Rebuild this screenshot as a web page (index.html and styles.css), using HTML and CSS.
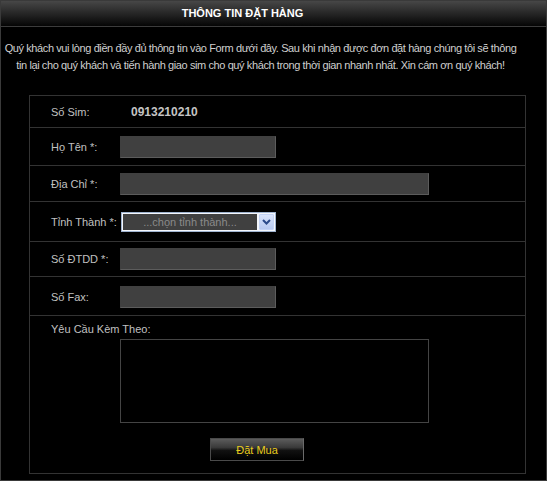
FILE: index.html
```html
<!DOCTYPE html>
<html lang="vi">
<head>
<meta charset="utf-8">
<title>Thông tin đặt hàng</title>
<link rel="stylesheet" href="styles.css">
</head>
<body>
<div class="frame">
  <div class="header">THÔNG TIN ĐẶT HÀNG</div>
  <p class="intro">Quý khách vui lòng điền đầy đủ thông tin vào Form dưới đây. Sau khi nhận được đơn đặt hàng chúng tôi sẽ thông tin lại cho quý khách và tiến hành giao sim cho quý khách trong thời gian nhanh nhất. Xin cám ơn quý khách!</p>
  <form class="table">
    <div class="row h31">
      <span class="label">Số Sim:</span>
      <span class="value">0913210210</span>
    </div>
    <div class="row h37">
      <span class="label">Họ Tên *:</span>
      <input class="field" type="text">
    </div>
    <div class="row h35">
      <span class="label">Địa Chỉ *:</span>
      <input class="field wide" type="text">
    </div>
    <div class="row h39">
      <span class="label">Tỉnh Thành *:</span>
      <div class="select">
        <select class="select-box"><option>...chọn tỉnh thành...</option></select>
        <span class="select-btn"><svg width="9" height="6" viewBox="0 0 9 6"><path d="M1 1 L4.5 4.5 L8 1" fill="none" stroke="#2b4a8a" stroke-width="2"/></svg></span>
      </div>
    </div>
    <div class="row h34">
      <span class="label">Số ĐTDD *:</span>
      <input class="field" type="text">
    </div>
    <div class="row h38">
      <span class="label">Số Fax:</span>
      <input class="field" type="text">
    </div>
    <div class="last">
      <span class="label">Yêu Cầu Kèm Theo:</span>
      <textarea class="note"></textarea>
      <div class="actions"><button type="button" class="btn">Đặt Mua</button></div>
    </div>
  </form>
</div>
</body>
</html>
```
FILE: styles.css
```css
* { box-sizing: border-box; }
html, body { margin: 0; padding: 0; background: #000; }
body { font-family: "Liberation Sans", Arial, sans-serif; font-size: 11px; color: #c8c8c8; }
.frame {
  width: 547px; height: 481px;
  border: 1px solid #3a3a3a;
  background: #000;
}
.header {
  height: 26px;
  background: linear-gradient(#474747, #262626 50%, #050505);
  border-bottom: 1px solid #3c3c3c;
  color: #fff;
  font-weight: bold;
  font-size: 11px;
  line-height: 25px;
  text-align: center;
  padding-right: 62px;
}
.intro {
  margin: 13px 0 0 0;
  width: 519px;
  height: 55px;
  text-align: center;
  line-height: 17px;
  letter-spacing: -0.4px;
  color: #cfcfcf;
}
.table {
  margin: 0 0 0 28px;
  width: 497px;
  border: 1px solid #333;
}
.row {
  display: flex;
  align-items: center;
  padding-left: 21px;
  border-bottom: 1px solid #333;
}
.h31 { height: 32px; }
.h37 { height: 38px; padding-top: 1px; }
.h35 { height: 36px; padding-top: 1px; }
.h39 { height: 40px; }
.h34 { height: 35px; }
.h38 { height: 39px; padding-top: 1px; }
.label { width: 69px; flex: none; color: #c0c0c0; white-space: nowrap; }
.value { font-weight: bold; color: #c4c4c4; margin-left: 11px; font-size: 12px; }
.field {
  width: 156px; height: 22px;
  background: #404040;
  border: 1px solid #404040;
  border-right-color: #5c5c5c;
  border-bottom-color: #5c5c5c;
  margin: 0;
  padding: 0 3px;
  color: #ddd;
  font: inherit;
}
.field.wide { width: 309px; }
.select {
  display: flex;
  gap: 2px;
  margin-left: 1px;
  width: 155px; height: 20px;
  border: 1px solid #9fb3cf;
  background: #f4f7fc;
  padding: 1px;
}
.select-box {
  appearance: none;
  -webkit-appearance: none;
  flex: 1;
  min-width: 0;
  height: 16px;
  margin: 0;
  border: 0;
  background: #404040;
  color: #8a8a8a;
  font: inherit;
  font-size: 11px;
  text-align: center;
  text-align-last: center;
  padding: 0;
  line-height: 16px;
}
.select-btn {
  width: 15px; height: 16px;
  flex: none;
  display: flex; align-items: center; justify-content: center;
  background: linear-gradient(#d9e4fb, #b7c9f0);
  border: 1px solid #c3d3f5;
  border-radius: 1px;
}
.last {
  height: 157px;
  display: grid;
  grid-template-columns: 69px 309px;
  align-content: start;
  padding: 7px 0 0 21px;
}
.last .label { grid-column: 1 / 3; line-height: 12px; }
.note {
  grid-column: 2;
  margin: 4px 0 0 0;
  width: 309px; height: 84px;
  background: #000;
  border: 1px solid #444;
  resize: none;
  color: #ccc;
  font: inherit;
}
.actions { grid-column: 1 / 3; padding: 15px 0 0 159px; }
.btn {
  display: block;
  width: 94px; height: 23px;
  margin: 0;
  border: 1px solid #4a4a4a;
  border-right-color: #6a6a6a;
  background: linear-gradient(#5c5c5c, #3a3a3a 40%, #111 55%, #000);
  color: #e8cc1e;
  font: inherit;
  font-size: 11px;
  padding: 0;
  cursor: pointer;
}
```
